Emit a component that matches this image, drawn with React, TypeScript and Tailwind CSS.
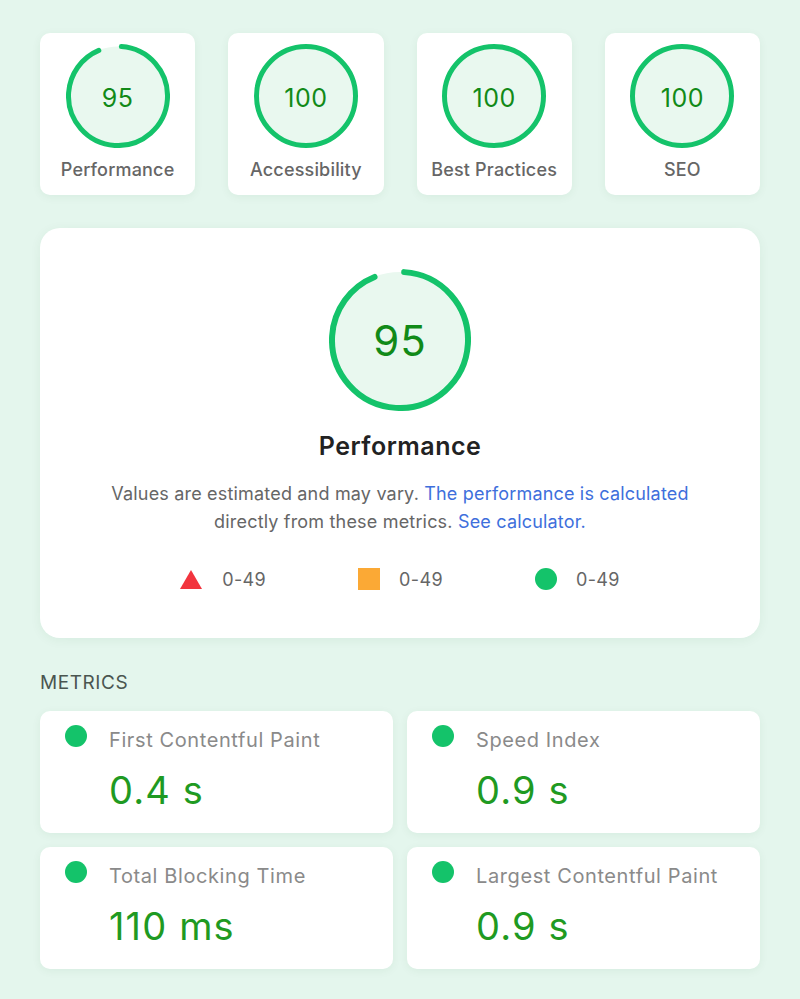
import React from 'react';

type Score = { label: string; value: number };

const scores: Score[] = [
  { label: 'Performance', value: 95 },
  { label: 'Accessibility', value: 100 },
  { label: 'Best Practices', value: 100 },
  { label: 'SEO', value: 100 },
];

const metrics = [
  { label: 'First Contentful Paint', value: '0.4 s' },
  { label: 'Speed Index', value: '0.9 s' },
  { label: 'Total Blocking Time', value: '110 ms' },
  { label: 'Largest Contentful Paint', value: '0.9 s' },
];

const Gauge: React.FC<{ value: number; size: number; stroke: number; textClass: string }> = ({
  value,
  size,
  stroke,
  textClass,
}) => {
  const r = (size - stroke) / 2;
  const c = 2 * Math.PI * r;
  // leave a visible gap so the rounded caps don't touch
  const dash = value >= 100 ? c : (c * value) / 100 - stroke * 1.6;
  return (
    <div className="relative flex items-center justify-center" style={{ width: size, height: size }}>
      <svg width={size} height={size} className="absolute inset-0 -rotate-90">
        <circle cx={size / 2} cy={size / 2} r={r} fill="#e9f8ef" />
        <circle
          cx={size / 2}
          cy={size / 2}
          r={r}
          fill="none"
          stroke="#14c36a"
          strokeWidth={stroke}
          strokeLinecap="round"
          strokeDasharray={`${dash} ${c}`}
          transform={value >= 100 ? undefined : `rotate(${(stroke / 2 / c) * 360 + 1} ${size / 2} ${size / 2})`}
        />
      </svg>
      <span className={`relative text-[#118a18] ${textClass}`}>{value}</span>
    </div>
  );
};

export default function App() {
  return (
    <div className="min-h-[999px] w-[800px] bg-[#e4f6ed] px-10 pt-[33px] font-['Inter',sans-serif]">
      {/* score cards */}
      <div className="grid grid-cols-4 gap-[33px]">
        {scores.map((s) => (
          <div
            key={s.label}
            className="flex h-[162px] flex-col items-center rounded-[10px] bg-white pt-[11px] shadow-[0_2px_10px_rgba(0,80,40,0.06)]"
          >
            <Gauge value={s.value} size={104} stroke={5} textClass="pt-[5px] text-[25px] tracking-[0.02em]" />
            <div className="mt-[8px] text-[18px] font-medium tracking-[0.01em] text-[#666]">{s.label}</div>
          </div>
        ))}
      </div>

      {/* performance card */}
      <div className="mt-[33px] flex h-[410px] flex-col items-center rounded-[20px] bg-white pt-[41px] shadow-[0_2px_12px_rgba(0,80,40,0.06)]">
        <Gauge value={95} size={142} stroke={6} textClass="text-[42px] tracking-[0.02em]" />
        <div className="mt-[17px] text-[25px] font-semibold tracking-[0.02em] text-[#222]">Performance</div>
        <p className="mt-[14px] w-[600px] text-center text-[18px] leading-[28px] tracking-[0.01em] text-[#666]">
          Values are estimated and may vary.{' '}
          <span className="text-[#3e6fdc]">The performance is calculated</span>
          <br />
          directly from these metrics. <span className="text-[#3e6fdc]">See calculator.</span>
        </p>
        <div className="mt-[30px] flex items-center gap-[92px] text-[18px] tracking-[0.02em] text-[#666]">
          <div className="flex items-center gap-[20px]">
            <svg width="22" height="19" viewBox="0 0 22 19">
              <polygon points="11,0 22,19 0,19" fill="#f2343e" />
            </svg>
            <span>0-49</span>
          </div>
          <div className="flex items-center gap-[19px]">
            <div className="h-[22px] w-[22px] bg-[#fba935]" />
            <span>0-49</span>
          </div>
          <div className="flex items-center gap-[19px]">
            <div className="h-[22px] w-[22px] rounded-full bg-[#14c36a]" />
            <span>0-49</span>
          </div>
        </div>
      </div>

      {/* metrics */}
      <div className="mt-[31px] text-[19px] tracking-[0.03em] text-[#4a5550]">METRICS</div>
      <div className="mt-[13px] grid grid-cols-2 gap-[14px]">
        {metrics.map((m) => (
          <div
            key={m.label}
            className="flex h-[122px] gap-[22px] rounded-[10px] bg-white pl-[25px] pt-[14px] shadow-[0_2px_10px_rgba(0,80,40,0.06)]"
          >
            <div className="h-[22px] w-[22px] shrink-0 rounded-full bg-[#14c36a]" />
            <div className="flex flex-col">
              <div className="text-[20px] leading-[30px] tracking-[0.03em] text-[#8a8a8a]">{m.label}</div>
              <div className="mt-[12px] text-[38px] leading-[46px] tracking-[0.03em] text-[#1f9a22]">{m.value}</div>
            </div>
          </div>
        ))}
      </div>
    </div>
  );
}
